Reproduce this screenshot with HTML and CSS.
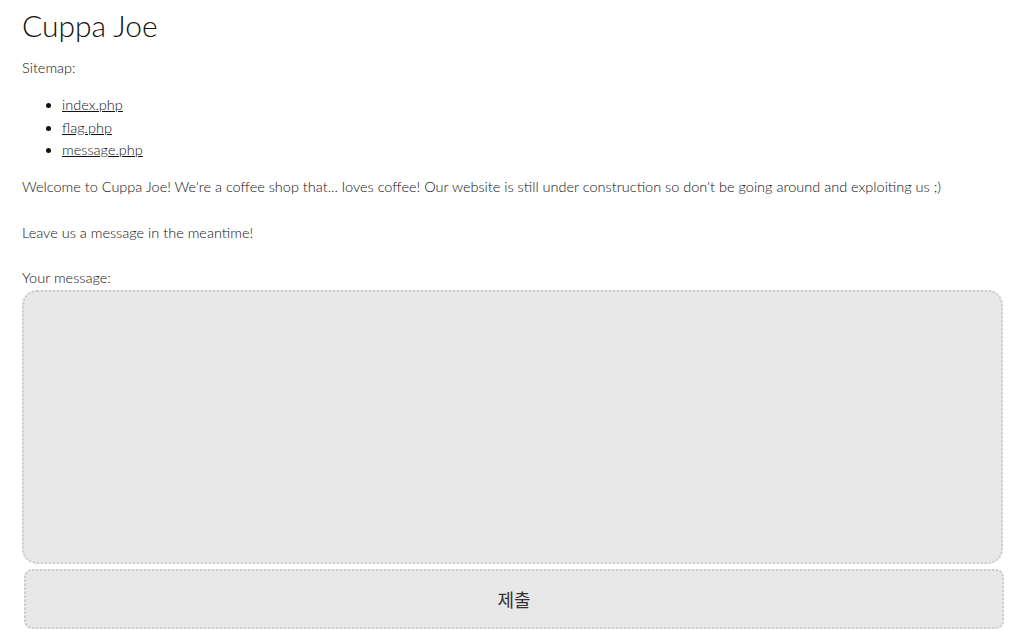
FILE: index.html
```html
<!DOCTYPE html>
<html lang="ko">
<head>
  <meta charset="UTF-8">
  <meta name="viewport" content="width=device-width, initial-scale=1.0">
  <title>Cuppa Joe</title>
  <link rel="stylesheet" href="styles.css">
</head>
<body>

  <div class="page">
    <h1>Cuppa Joe</h1>
    <p>Sitemap:</p>
    <ul>
      <li><a href="index.php">index.php</a></li>
      <li><a href="flag.php">flag.php</a></li>
      <li><a href="message.php">message.php</a></li>
    </ul>

    <p>
      Welcome to Cuppa Joe! We're a coffee shop that... loves coffee! Our website is still under construction so don't be going around and exploiting us ;)
      <br><br>
      Leave us a message in the meantime!
      <br><br>
      Your message:
    </p>

    <form class="msg-form" method="post">
      <textarea name="message" class="msg-box"></textarea>
      <button type="submit" class="submit-btn">제출</button>
    </form>
  </div>

</body>
</html>
```

FILE: styles.css
```css
body {
  margin: 0;
  padding: 0;
  font-family: 'Lato', sans-serif;
  font-weight: 300;
  font-size: 14.5px;
  line-height: 22.75px;
  color: #111;
  background-color: #fff;
}
.page {
  padding: 7px 22px 0 22px;
}
h1 {
  font-size: 30px;
  font-weight: 300;
  line-height: 36px;
  margin: 0 0 14px 0;
}
p {
  margin: 0;
}
ul {
  margin: 14px 0;
  padding-left: 40px;
}
a {
  color: #111;
}
.msg-form {
  margin: 0;
}
.msg-box {
  display: block;
  box-sizing: border-box;
  width: 100%;
  height: 274px;
  margin: 0;
  background-color: #e8e8e8;
  border: 2px dotted #ccc;
  border-radius: 15px;
  resize: none;
  font-family: 'Lato', sans-serif;
}
.submit-btn {
  display: block;
  box-sizing: border-box;
  width: calc(100% - 1px);
  height: 60px;
  margin: 5px 0 0 2px;
  background-color: #e8e8e8;
  border: 2px dotted #ccc;
  border-radius: 8px;
  font-family: 'Noto Sans CJK KR', sans-serif;
  font-size: 18px;
  color: #333;
  cursor: pointer;
}
```
